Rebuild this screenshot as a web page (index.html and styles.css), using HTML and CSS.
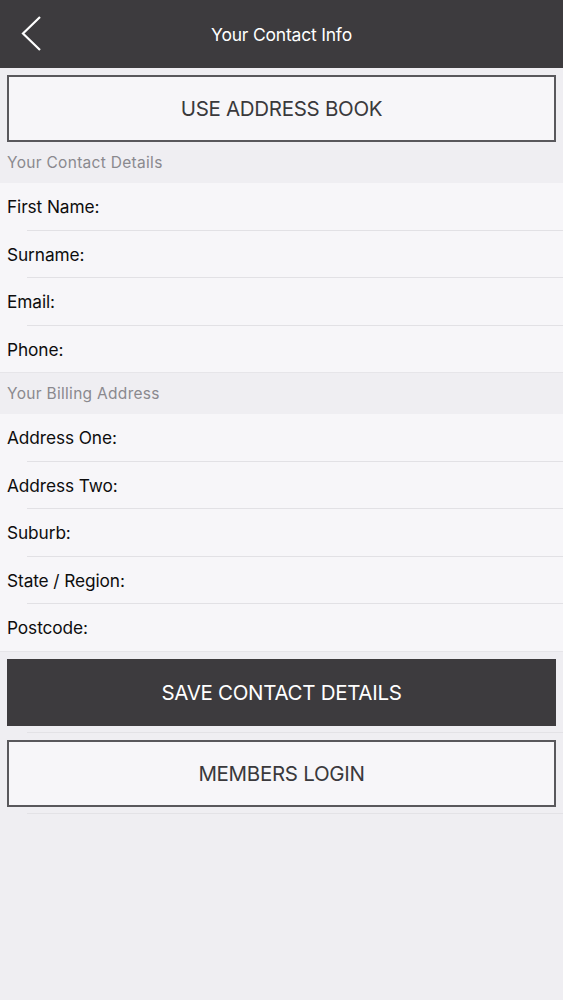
FILE: index.html
```html
<!DOCTYPE html>
<html>
<head>
<meta charset="utf-8">
<link rel="stylesheet" href="styles.css">
</head>
<body>
<header class="nav">
  <svg class="back" width="24" height="38" viewBox="0 0 24 38"><polyline points="19,1 2,17.5 19,34" fill="none" stroke="#fff" stroke-width="2.2"/></svg>
  <div class="title">Your Contact Info</div>
</header>
<div class="btn-cell"><div class="btn outline">USE ADDRESS BOOK</div></div>
<div class="section">Your Contact Details</div>
<div class="row">First Name:</div>
<div class="row">Surname:</div>
<div class="row">Email:</div>
<div class="row last">Phone:</div>
<div class="section">Your Billing Address</div>
<div class="row">Address One:</div>
<div class="row">Address Two:</div>
<div class="row">Suburb:</div>
<div class="row">State / Region:</div>
<div class="row last">Postcode:</div>
<div class="btn-cell sep"><div class="btn dark">SAVE CONTACT DETAILS</div></div>
<div class="btn-cell sep"><div class="btn outline">MEMBERS LOGIN</div></div>
</body>
</html>
```
FILE: styles.css
```css
html, body { margin: 0; padding: 0; }
body {
  background: #efeef2;
  font-family: Inter, Roboto, sans-serif;
  width: 563px;
  min-height: 1000px;
}
.nav {
  height: 68px;
  background: #3d3b3e;
  display: flex;
  align-items: center;
  justify-content: center;
  position: relative;
}
.back { position: absolute; left: 21px; top: 16px; }
.title { color: #fff; font-size: 17.5px; letter-spacing: -0.2px; }
.btn-cell {
  padding: 7px 7px 0 7px;
  background: #efeef2;
  position: relative;
}
.btn-cell.sep { padding-bottom: 7px; }
.btn-cell.sep::after {
  content: "";
  position: absolute;
  left: 27px; right: 0; bottom: 0;
  height: 1px;
  background: #e3e2e6;
}
.btn {
  height: 67px;
  box-sizing: border-box;
  display: flex;
  align-items: center;
  justify-content: center;
  font-size: 20.5px;
  letter-spacing: -0.3px;
}
.btn.outline {
  background: #f7f6f9;
  border: 2px solid #59585c;
  color: #3a393c;
}
.btn.dark {
  background: #3d3b3e;
  color: #fff;
}
.section {
  height: 41px;
  display: flex;
  align-items: center;
  padding-left: 7px;
  font-size: 15.5px;
  letter-spacing: 0.3px;
  color: #8a898e;
  background: #efeef2;
}
.row {
  height: 47.5px;
  box-sizing: border-box;
  display: flex;
  align-items: center;
  padding-left: 7px;
  font-size: 17.3px;
  letter-spacing: -0.1px;
  color: #0d0d0d;
  background: #f7f6f9;
  position: relative;
}
.row::after {
  content: "";
  position: absolute;
  left: 27px; right: 0; bottom: 0;
  height: 1px;
  background: #e2e1e5;
}
.row.last::after { left: 0; background: #e6e5e9; }
```
